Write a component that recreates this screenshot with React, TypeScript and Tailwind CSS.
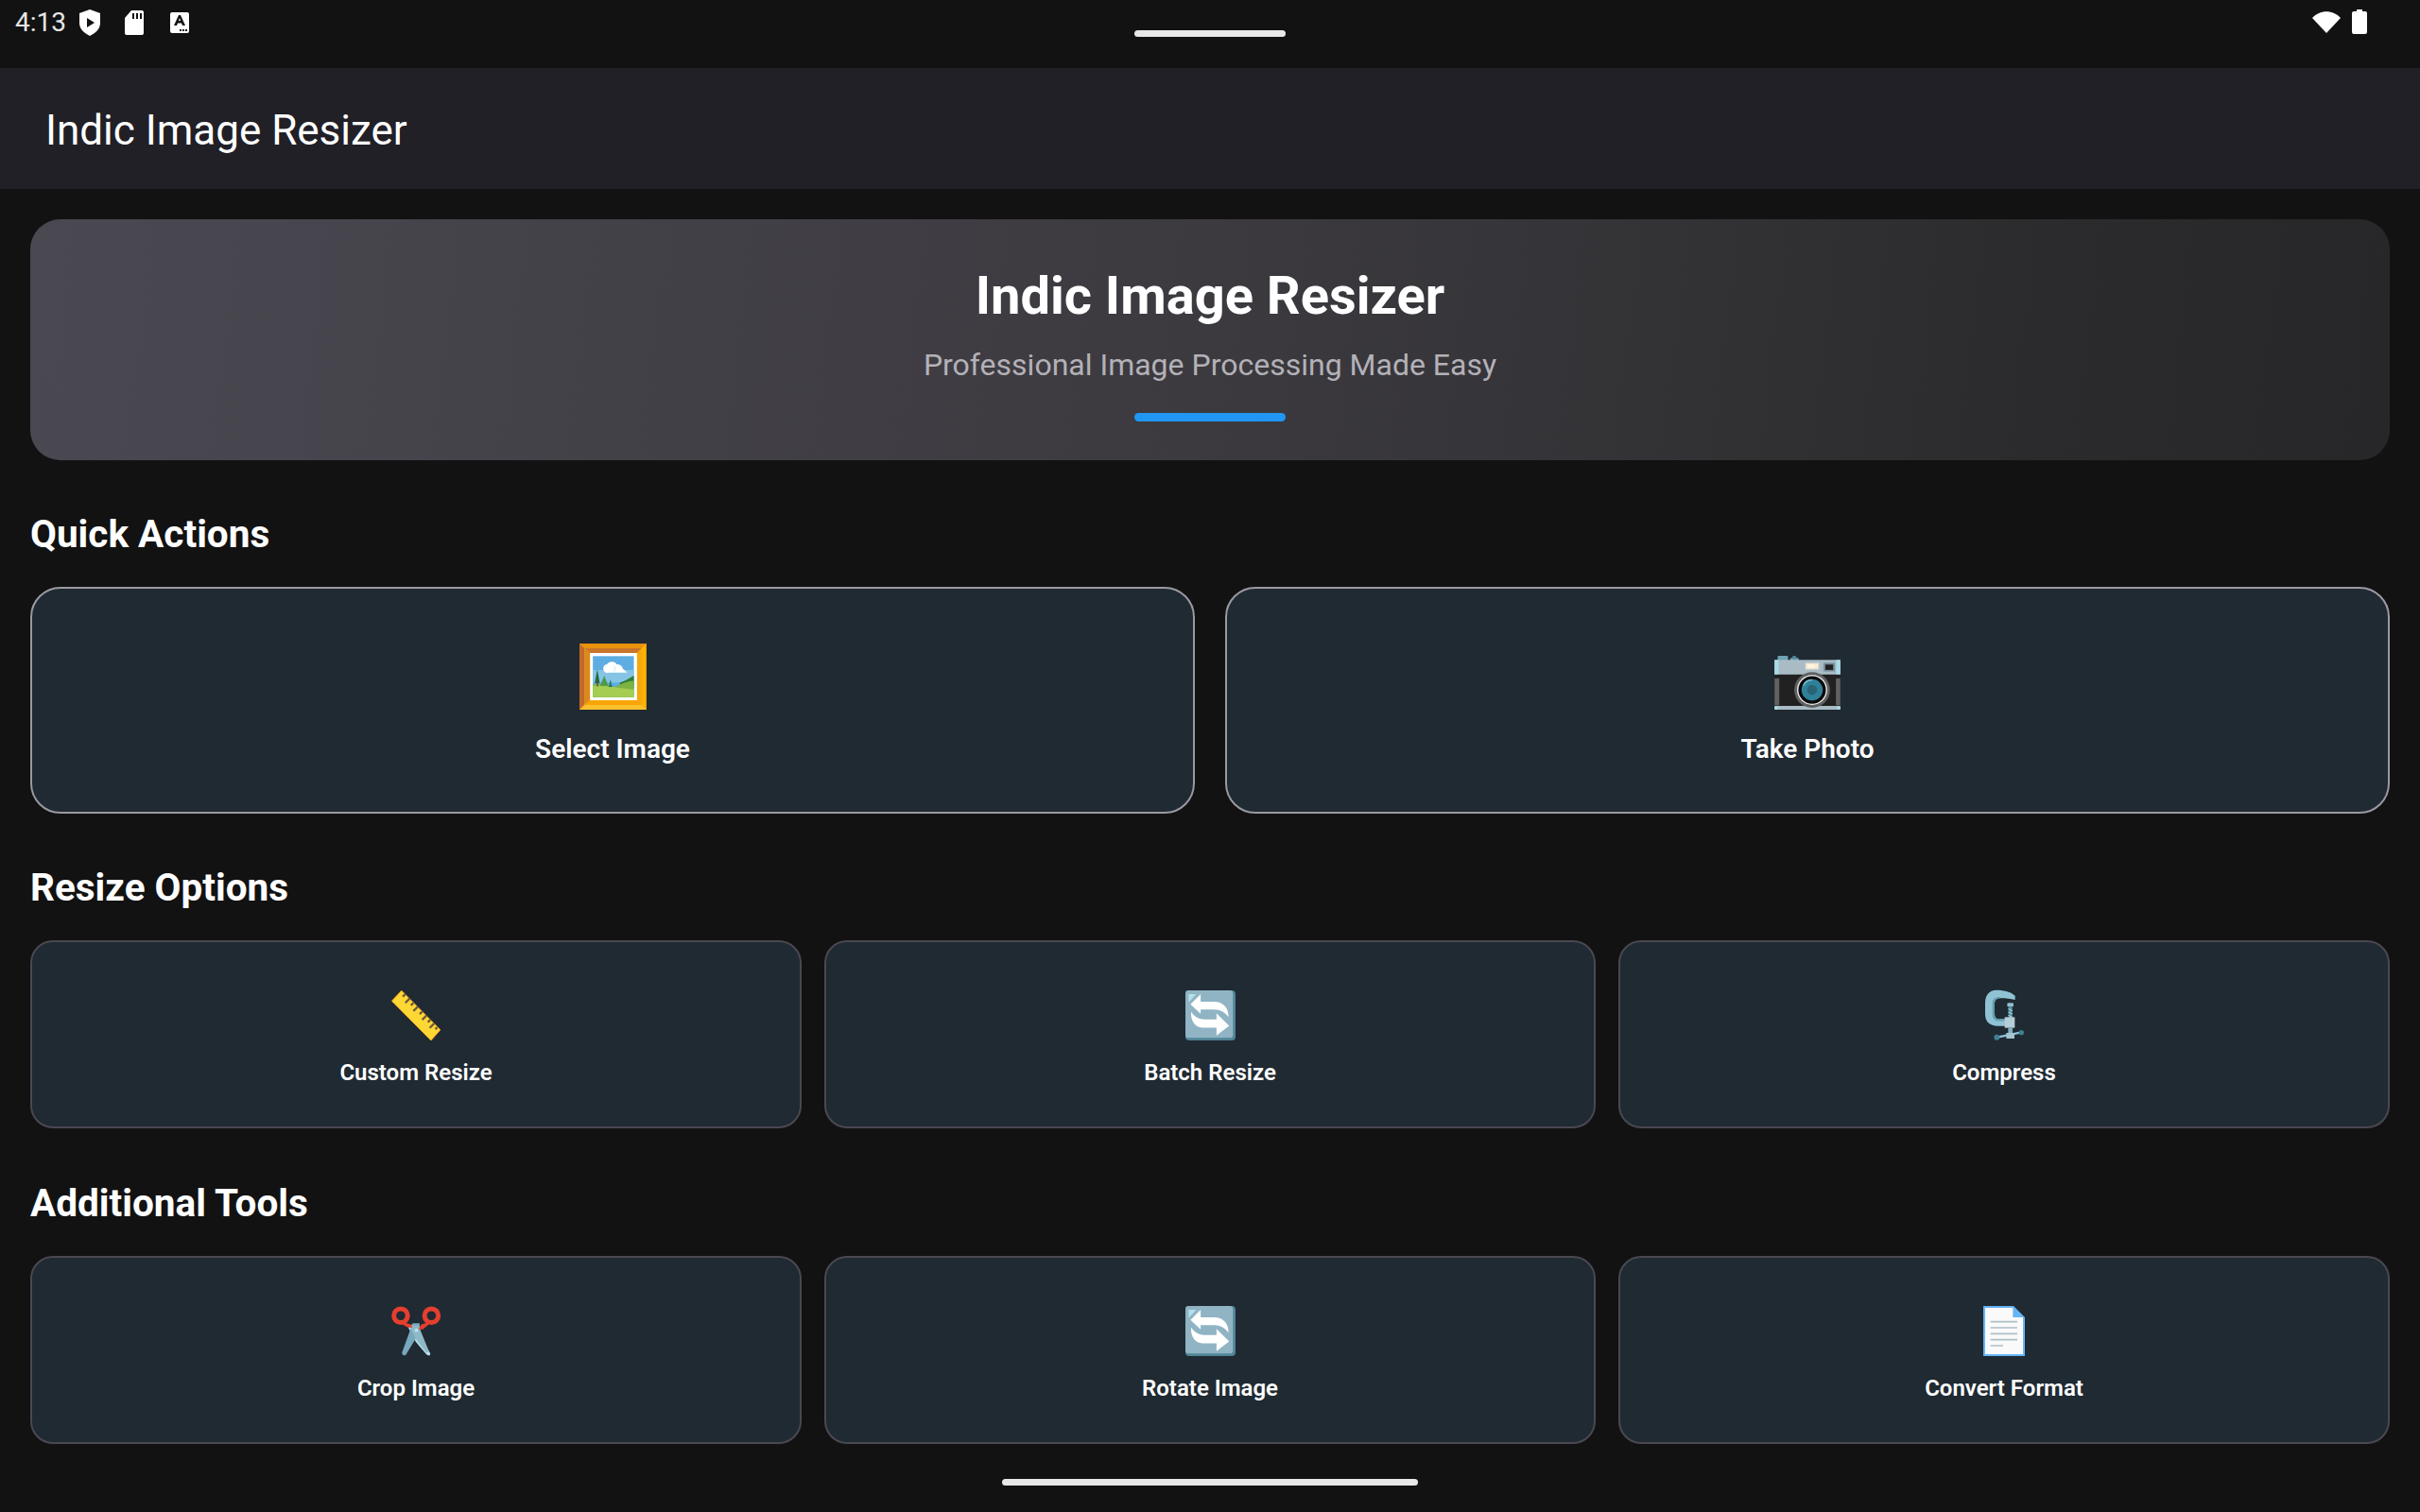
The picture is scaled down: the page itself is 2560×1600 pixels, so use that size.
import React from "react";

const PictureIcon = () => (
  <svg width={71} height={70} viewBox="157 66 212 210">
    <rect x="157" y="66" width="212" height="210" fill="#ffb300" />
    <path d="M157 66h212l-15 15H172z" fill="#e8920e" />
    <path d="M157 66l15 15v180l-15 15z" fill="#c2682b" />
    <path d="M172 81h182l-15 15H190z" fill="#c9752a" />
    <path d="M172 81l18 15v150l-18 15z" fill="#d98a20" />
    <path d="M354 81v180l-15-15V96z" fill="#f5a80f" />
    <path d="M157 276l15-15h182l15 15z" fill="#fbc02d" />
    <path d="M172 261l18-15h149l15 15z" fill="#f9a50a" />
    <rect x="190" y="96" width="149" height="150" fill="#ffffff" />
    <rect x="199" y="106" width="130" height="130" fill="#5dade2" />
    <path d="M199 150h130v40H199z" fill="#86c4e6" />
    <path d="M285 190c14-4 30-14 44-22v40h-44z" fill="#2e7d32" />
    <path d="M199 196c32-6 56 2 70 8 20-10 40-18 60-20v52H199z" fill="#7cb342" />
    <path d="M199 200c40-2 80 8 130 12v24H199z" fill="#a5cd52" />
    <path d="M213 148l8 44h-16z" fill="#1f6b3a" />
    <rect x="211" y="188" width="5" height="14" fill="#7a5230" />
    <path d="M235 168l13 32h-26z" fill="#4c9a4a" />
    <path d="M255 180l6 24h-12z" fill="#2e7d5a" />
    <path d="M232 146c0-10 8-14 12-14 4-10 26-12 30 0 10-2 20 6 20 14 6 4 10 8 14 12h-58c-10 4-18-4-18-12z" fill="#ffffff" />
    <path d="M265 136c6 4 6 12 2 18" stroke="#cfe6f4" strokeWidth="3" fill="none" />
  </svg>
);

const CameraIcon = () => (
  <svg width={70} height={57} viewBox="140 75 210 172">
    <rect x="150" y="75" width="33" height="18" rx="4" fill="#6fa3b4" />
    <rect x="190" y="82" width="27" height="10" rx="3" fill="#6fa3b4" />
    <rect x="196" y="75" width="14" height="10" rx="5" fill="#4f8595" />
    <rect x="140" y="88" width="210" height="47" fill="#a9bcc5" />
    <rect x="140" y="88" width="13" height="47" fill="#a8dbe6" />
    <rect x="337" y="88" width="13" height="47" fill="#a8dbe6" />
    <rect x="140" y="135" width="210" height="100" fill="#212121" />
    <rect x="140" y="147" width="15" height="86" fill="#616161" />
    <rect x="336" y="147" width="14" height="86" fill="#616161" />
    <rect x="140" y="235" width="210" height="12" rx="3" fill="#a9bcc5" />
    <rect x="140" y="236" width="10" height="10" fill="#a8dbe6" />
    <rect x="340" y="236" width="10" height="10" fill="#a8dbe6" />
    <rect x="238" y="97" width="44" height="22" fill="#cfd8dc" />
    <rect x="241" y="100" width="38" height="16" fill="#ffeccb" />
    <path d="M249 102v12M256 102v12M263 102v12" stroke="#ffffff" strokeWidth="3" />
    <rect x="296" y="97" width="37" height="28" fill="#78909c" />
    <rect x="302" y="103" width="25" height="17" fill="#212121" />
    <circle cx="260" cy="184" r="57" fill="#616161" />
    <circle cx="260" cy="184" r="48" fill="#eceff1" />
    <circle cx="260" cy="184" r="44" fill="#0a0a0a" />
    <circle cx="260" cy="184" r="34" fill="#2f8199" />
    <circle cx="260" cy="184" r="16" fill="#2a6474" />
    <path d="M232 170a30 30 0 0 1 28-18" stroke="#7fc3d3" strokeWidth="4" fill="none" />
  </svg>
);

const RulerIcon = () => (
  <svg width={52} height={53} viewBox="102 52 156 160">
    <path d="M134 53l124 125-30 34L103 86z" fill="#fdd835" stroke="#f9a825" strokeWidth="3" />
    <path
      d="M146 64l-8 8M160 78l-14 14M172 92l-8 8M186 104l-14 14M200 120l-8 8M214 132l-14 14M226 146l-8 8M238 158l-14 14M248 170l-6 6"
      stroke="#6d5a3a"
      strokeWidth="7"
      fill="none"
    />
  </svg>
);

const RefreshIcon = () => (
  <svg width={53} height={53} viewBox="100 54 158 158">
    <rect x="100" y="54" width="158" height="158" rx="12" fill="#4f8595" />
    <rect x="100" y="54" width="150" height="150" rx="10" fill="#90b4c4" />
    <path d="M110 66h24l-24 26z" fill="#b5e0ea" />
    <path d="M148 66V90H190C218 90 236 108 236 138C224 122 210 114 190 114H148V128L116 98Z" fill="#ffffff" />
    <path d="M118 122C130 138 142 146 160 146H198V126L238 166L198 196V172H156C130 172 116 150 118 122Z" fill="#ffffff" />
  </svg>
);

const ClampIcon = () => (
  <svg width={41} height={54} viewBox="125 52 123 162">
    <path
      d="M220 72C205 58 180 54 160 54C138 54 125 70 125 95V130C125 155 140 168 165 168H190V146H170C160 146 155 140 155 130V98C155 86 162 80 175 80C190 80 205 82 220 85Z"
      fill="#8fc3d3"
    />
    <path d="M155 98V130C155 140 160 146 170 146H190V152H168C154 152 148 142 148 130V96C148 84 156 76 170 76L175 80C162 80 155 86 155 98Z" fill="#5f9dae" />
    <rect x="195" y="95" width="20" height="12" rx="4" fill="#8fc0cf" />
    <path d="M199 107h12v35h-12z" fill="#5b97a8" />
    <path d="M198 114l14 6M198 124l14 6M198 134l14 6" stroke="#a5d3de" strokeWidth="3" />
    <rect x="187" y="140" width="32" height="34" fill="#b5cdd6" />
    <rect x="198" y="174" width="14" height="24" fill="#7fb0bf" />
    <path d="M164 204l76-16" stroke="#90c4d4" strokeWidth="7" />
    <rect x="192" y="190" width="26" height="18" fill="#a5c4cf" />
    <circle cx="162" cy="204" r="9" fill="#3f7f92" />
    <circle cx="240" cy="189" r="8" fill="#3f7f92" />
  </svg>
);

const ScissorsIcon = () => (
  <svg width={53} height={53} viewBox="100 65 160 160">
    <path d="M168 122l30 48 26 46c2 8-6 10-12 4l-34-40-24-46z" fill="#b5e0ea" />
    <path d="M190 120l-22 0-34 94c0 10 10 12 14 4l44-72z" fill="#78a8bb" />
    <path d="M158 130l28-4 34 84c-2 4-6 4-10 2l-32-42z" fill="#8fb8c8" />
    <circle cx="130" cy="96" r="22" fill="none" stroke="#e53f2f" strokeWidth="15" />
    <circle cx="228" cy="96" r="22" fill="none" stroke="#e53f2f" strokeWidth="15" />
    <path d="M136 116l26 8 6 10-16 0-22-14zM222 116l-26 8-10 16 14 0 22-18z" fill="#e53f2f" />
    <circle cx="180" cy="143" r="6" fill="#b5e0ea" />
  </svg>
);

const DocIcon = () => (
  <svg width={44} height={53} viewBox="114 66 132 159">
    <path d="M114 66h96l36 36v123H114z" fill="#64b5f6" />
    <path d="M120 72h88v30h32v117H120z" fill="#fafafa" />
    <path d="M210 70l32 32h-32z" fill="#64b5f6" />
    <path d="M137 116h85M137 135h85M137 154h85M137 173h85M137 192h40" stroke="#aebfc6" strokeWidth="5" />
  </svg>
);

const ActionCard = ({ icon, label }: { icon: React.ReactNode; label: string }) => (
  <div className="flex h-[240px] flex-col items-center rounded-[32px] border-2 border-[#9b99a1] bg-[#1f2a33] pt-[56px]">
    <div className="flex h-[72px] items-end justify-center">{icon}</div>
    <span className="mt-[24px] text-[28px] leading-[36px] font-semibold text-white">{label}</span>
  </div>
);

const ToolCard = ({ icon, label }: { icon: React.ReactNode; label: string }) => (
  <div className="flex h-[199px] flex-col items-center rounded-[24px] border-2 border-[#4a4850] bg-[#1f2a33] pt-[49px]">
    <div className="flex h-[56px] items-center justify-center">{icon}</div>
    <span className="mt-[17px] text-[24px] leading-[32px] font-semibold text-white">{label}</span>
  </div>
);

const SectionTitle = ({ children }: { children: React.ReactNode }) => (
  <h2 className="text-[40.5px] leading-[48px] font-bold text-white">{children}</h2>
);

export default function App() {
  return (
    <div className="relative h-[1600px] w-[2560px] overflow-hidden bg-[#121212] font-['Roboto',sans-serif]">
      {/* status bar */}
      <div className="relative flex h-[72px] items-start justify-between bg-[#121212] pl-[16px] pr-[56px] pt-[10px]">
        <div className="flex items-center">
          <span className="text-[28px] leading-[28px] text-[#e6e6e6]">4:13</span>
          <svg width={24} height={28} viewBox="0 0 24 28" className="ml-[13px]">
            <path d="M12 0l11 4v10c0 7-5 11-11 14C6 25 1 21 1 14V4z" fill="#fff" />
            <path d="M9 9l8 5-8 5z" fill="#121212" />
          </svg>
          <svg width={20} height={26} viewBox="0 0 20 26" className="ml-[25px]">
            <path d="M7 0h11a2 2 0 0 1 2 2v22a2 2 0 0 1-2 2H2a2 2 0 0 1-2-2V8z" fill="#fff" />
            <path d="M8 3h2v6H8zM12 3h2v6h-2zM16 3h2v6h-2z" fill="#121212" />
          </svg>
          <svg width={20} height={22} viewBox="0 0 20 22" className="ml-[28px]">
            <rect width="20" height="22" rx="2" fill="#fff" />
            <path d="M4 14L9 3h2l5 11h-3l-1-2.500H8L7 14zm5-5h2l-1-3z" fill="#121212" />
            <path d="M10 18h2v2h-2zM13 18h2v2h-2zM16 18h2v2h-2z" fill="#121212" />
          </svg>
        </div>
        <div className="flex items-center gap-[12px]">
          <svg width={30} height={26} viewBox="0 0 30 26">
            <path d="M15 25L0 9C8 0 22 0 30 9z" fill="#fff" />
          </svg>
          <svg width={16} height={26} viewBox="0 0 16 26">
            <path d="M5 0h6v2h3a2 2 0 0 1 2 2v20a2 2 0 0 1-2 2H2a2 2 0 0 1-2-2V4a2 2 0 0 1 2-2h3z" fill="#fff" />
          </svg>
        </div>
        <div className="absolute left-[1200px] top-[32px] h-[7px] w-[160px] rounded-full bg-[#e8e8e8]" />
      </div>

      {/* app bar */}
      <div className="flex h-[128px] items-center bg-[#212027] pl-[48px] pt-[3px]">
        <span className="text-[44px] leading-[52px] text-white">Indic Image Resizer</span>
      </div>

      <div className="flex flex-col px-[32px] pt-[32px]">
        {/* hero */}
        <div className="flex h-[255px] flex-col items-center rounded-[32px] bg-[linear-gradient(97deg,#4a4851,#3c3a3f_50%,#2b2b2d_85%,#272729)] pt-[48px]">
          <h1 className="text-[56px] leading-[66px] font-bold text-white">Indic Image Resizer</h1>
          <p className="mt-[20px] text-[32px] leading-[40px] text-[#b3b1b8]">
            Professional Image Processing Made Easy
          </p>
          <div className="mt-[31px] h-[9px] w-[160px] rounded-full bg-[#2196f3]" />
        </div>

        <div className="mt-[54px]">
          <SectionTitle>Quick Actions</SectionTitle>
        </div>
        <div className="mt-[32px] grid grid-cols-2 gap-[32px]">
          <ActionCard icon={<PictureIcon />} label="Select Image" />
          <ActionCard icon={<CameraIcon />} label="Take Photo" />
        </div>

        <div className="mt-[54px]">
          <SectionTitle>Resize Options</SectionTitle>
        </div>
        <div className="mt-[32px] grid grid-cols-3 gap-[24px]">
          <ToolCard icon={<RulerIcon />} label="Custom Resize" />
          <ToolCard icon={<RefreshIcon />} label="Batch Resize" />
          <ToolCard icon={<ClampIcon />} label="Compress" />
        </div>

        <div className="mt-[55px]">
          <SectionTitle>Additional Tools</SectionTitle>
        </div>
        <div className="mt-[32px] grid grid-cols-3 gap-[24px]">
          <ToolCard icon={<ScissorsIcon />} label="Crop Image" />
          <ToolCard icon={<RefreshIcon />} label="Rotate Image" />
          <ToolCard icon={<DocIcon />} label="Convert Format" />
        </div>
      </div>

      {/* gesture handle */}
      <div className="absolute bottom-[28px] left-[1060px] h-[7px] w-[440px] rounded-full bg-[#e8e8e8]" />
    </div>
  );
}
